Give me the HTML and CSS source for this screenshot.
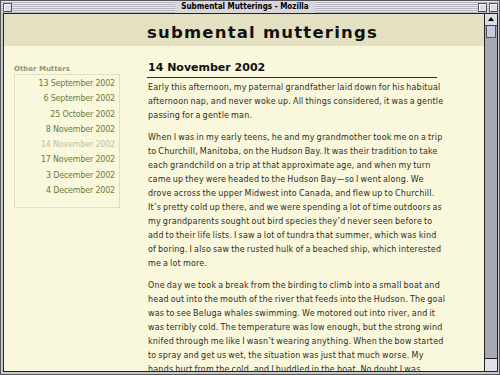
FILE: index.html
```html
<!DOCTYPE html>
<html lang="en">
<head>
    <meta charset="UTF-8">
    <title>Submental Mutterings - Mozilla</title>
    <link rel="stylesheet" href="styles.css">
</head>
<body>

<div class="window">
    <div class="titlebar">
        <span class="box close-box"></span>
        <div class="title"><span>Submental Mutterings - Mozilla</span></div>
        <span class="box zoom-box"></span>
        <span class="box shade-box"></span>
    </div>

    <div class="frame">
        <div class="viewport">
            <div class="masthead">
                <h1>submental mutterings</h1>
            </div>

            <div class="columns">
                <div class="sidebar">
                    <div class="sidebar-label">Other Mutters</div>
                    <ul class="archive">
                        <li><a href="#">13 September 2002</a></li>
                        <li><a href="#">6 September 2002</a></li>
                        <li><a href="#">25 October 2002</a></li>
                        <li><a href="#">8 November 2002</a></li>
                        <li class="current">14 November 2002</li>
                        <li><a href="#">17 November 2002</a></li>
                        <li><a href="#">3 December 2002</a></li>
                        <li><a href="#">4 December 2002</a></li>
                    </ul>
                </div>

                <div class="entry">
                    <h2>14 November 2002</h2>
                    <p>Early this afternoon, my paternal grandfather laid down for his habitual afternoon nap, and never woke up. All things considered, it was a gentle passing for a gentle man.</p>
                    <p>When I was in my early teens, he and my grandmother took me on a trip to Churchill, Manitoba, on the Hudson Bay. It was their tradition to take each grandchild on a trip at that approximate age, and when my turn came up they were headed to the Hudson Bay&mdash;so I went along. We drove across the upper Midwest into Canada, and flew up to Churchill. It&rsquo;s pretty cold up there, and we were spending a lot of time outdoors as my grandparents sought out bird species they&rsquo;d never seen before to add to their life lists. I saw a lot of tundra that summer, which was kind of boring. I also saw the rusted hulk of a beached ship, which interested me a lot more.</p>
                    <p>One day we took a break from the birding to climb into a small boat and head out into the mouth of the river that feeds into the Hudson. The goal was to see Beluga whales swimming. We motored out into river, and it was terribly cold. The temperature was low enough, but the strong wind knifed through me like I wasn&rsquo;t wearing anything. When the bow started to spray and get us wet, the situation was just that much worse. My hands hurt from the cold, and I huddled in the boat. No doubt I was</p>
                </div>
            </div>
        </div>

        <div class="scrollbar">
            <div class="arrow-up"></div>
            <div class="thumb"></div>
            <div class="track"></div>
            <div class="grow-box"></div>
        </div>
    </div>
</div>

</body>
</html>
```

FILE: styles.css
```css
body {
    margin: 0;
    background-color: #9a9aa2;
    font-family: "DejaVu Sans", Verdana, sans-serif;
}

.window {
    width: 500px;
    height: 375px;
    box-sizing: border-box;
    border: 1px solid #55555c;
    background-color: #c8c8d0;
    display: flex;
    flex-direction: column;
    overflow: hidden;
}

.titlebar {
    height: 12px;
    display: flex;
    align-items: center;
    padding: 0 1px 0 2px;
    background: repeating-linear-gradient(#e8e8ee 0, #e8e8ee 1px, #b4b4bc 1px, #b4b4bc 2px);
}

.title {
    flex: 1;
    display: flex;
    justify-content: center;
    height: 12px;
}

.title span {
    padding: 0 6px;
    font-family: "DejaVu Sans Condensed", "DejaVu Sans", sans-serif;
    font-weight: bold;
    font-size: 8px;
    line-height: 12px;
    color: #000000;
    background-color: #d6d6dc;
}

.box {
    width: 7px;
    height: 7px;
    border: 1px solid #55555c;
    background-color: #dcdce2;
    box-shadow: inset 1px 1px 0 #ffffff;
}

.zoom-box {
    margin-right: 2px;
}

.frame {
    flex: 1;
    display: flex;
    margin: 0 1px 2px 2px;
    border: 1px solid #222228;
    min-height: 0;
}

.viewport {
    flex: 1;
    background-color: #f9f7dc;
    overflow: hidden;
    color: #2e2e26;
}

.masthead {
    background-color: #e3e1c2;
    height: 32px;
    display: flex;
    align-items: center;
    justify-content: center;
    padding-left: 37px;
    padding-top: 5px;
    box-sizing: border-box;
}

h1 {
    margin: 0;
    font-family: "DejaVu Sans", sans-serif;
    font-size: 16.5px;
    font-weight: bold;
    letter-spacing: 1.2px;
    color: #111111;
}

.columns {
    display: flex;
    padding-top: 13px;
}

.sidebar {
    width: 106px;
    margin: 6px 27px 0 10px;
    flex-shrink: 0;
}

.sidebar-label {
    font-size: 7px;
    font-weight: bold;
    color: #93937a;
    line-height: 9px;
}

.archive {
    list-style: none;
    margin: 0;
    padding: 1px 4px 9px 0;
    border: 1px solid #e2dfbf;
    text-align: right;
}

.archive li {
    font-size: 8px;
    line-height: 15.3px;
    letter-spacing: -0.2px;
}

.archive a {
    color: #6e7c3c;
    text-decoration: none;
}

.archive .current {
    color: #c3c3a5;
}

.entry {
    width: 290px;
}

h2 {
    margin: 0 0 3px 0;
    padding: 1px 0 2px 1px;
    font-size: 11px;
    font-weight: bold;
    color: #111111;
    line-height: 15px;
    border-bottom: 1px solid #333333;
}

p {
    width: 298px;
    margin: 0 0 8px 1px;
    font-size: 8px;
    line-height: 14px;
    letter-spacing: 0.2px;
    word-spacing: -0.8px;
}

.scrollbar {
    width: 12px;
    border-left: 1px solid #222228;
    background-color: #a8a8b4;
    display: flex;
    flex-direction: column;
}

.arrow-up {
    height: 11px;
    background-color: #dcdce4;
    border-bottom: 1px solid #444444;
    position: relative;
}

.arrow-up::after {
    content: "";
    position: absolute;
    left: 3px;
    top: 3px;
    border-left: 3px solid transparent;
    border-right: 3px solid transparent;
    border-bottom: 4px solid #000000;
}

.thumb {
    height: 11px;
    margin: 0 1px;
    background-color: #c8c8e0;
    border: 1px solid #55555c;
    border-top: none;
}

.track {
    flex: 1;
}

.grow-box {
    height: 12px;
    background-color: #e0e0e6;
    border-top: 1px solid #222228;
}
```
